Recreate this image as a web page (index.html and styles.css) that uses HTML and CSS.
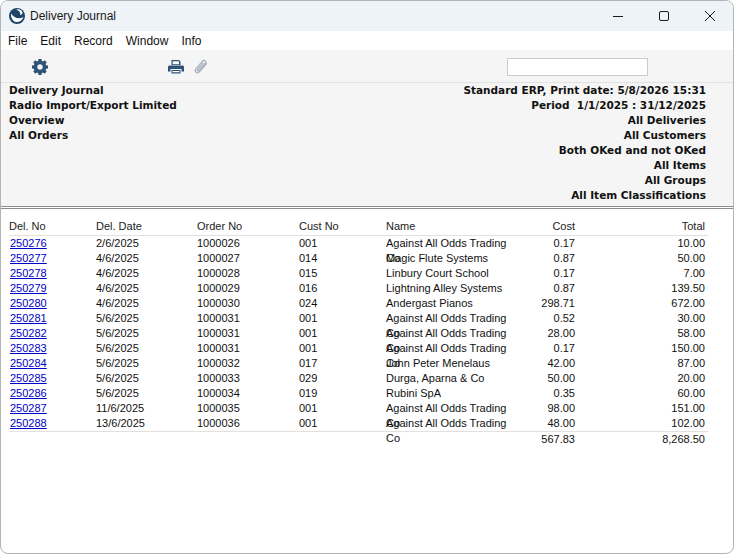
FILE: index.html
```html
<!DOCTYPE html>
<html lang="en">
<head>
    <meta charset="UTF-8">
    <title>Delivery Journal</title>
    <link rel="stylesheet" href="styles.css">
</head>
<body>
    <div class="window">
        <div class="titlebar">
            <svg class="logo" width="18" height="18" viewBox="0 0 18 18">
                <circle cx="9" cy="9" r="8" fill="#1f4468"/>
                <path d="M3 6.500c3 4.500 8 6 12.500 3.500-1 3.500-4.500 5.500-7.500 5-3-.5-5.500-4.500-5-8.500z" fill="#fff"/>
                <path d="M8 2.500c3-1 6 .5 6.500 3 .2 1.500-1 2.500-2.500 2.500 1-1.500 0-4-4-5.500z" fill="#fff"/>
            </svg>
            <span class="title">Delivery Journal</span>
            <div class="window-buttons">
                <svg width="12" height="12" viewBox="0 0 12 12"><path d="M1 6.500h10" stroke="#1a1a1a" fill="none"/></svg>
                <svg width="12" height="12" viewBox="0 0 12 12"><rect x="1.500" y="1.500" width="9" height="9" rx="1.500" stroke="#1a1a1a" fill="none"/></svg>
                <svg width="12" height="12" viewBox="0 0 12 12"><path d="M1 1l10 10M11 1L1 11" stroke="#1a1a1a" fill="none"/></svg>
            </div>
        </div>
        <div class="menubar">
            <span>File</span><span>Edit</span><span>Record</span><span>Window</span><span>Info</span>
        </div>
        <div class="toolbar">
            <svg class="gear" width="16" height="16" viewBox="0 0 18 18">
                <path fill-rule="evenodd" fill="#2d5273" d="M7.300 0h3.400l.4 2.200 1.300.6 1.900-1.300 2.300 2.300-1.300 1.900.6 1.300 2.100.4v3.200l-2.100.4-.6 1.300 1.300 1.900-2.300 2.300-1.900-1.300-1.300.6-.4 2.200H7.300l-.4-2.200-1.300-.6-1.900 1.300-2.300-2.300 1.300-1.900-.6-1.300L0 10.600V7.400l2.100-.4.600-1.300-1.300-1.900 2.300-2.300 1.900 1.300 1.300-.6zM9 6a3 3 0 1 0 0 6 3 3 0 0 0 0-6z"/>
            </svg>
            <svg class="printer" width="16" height="14" viewBox="0 0 16 14">
                <path fill="#2d5273" d="M3.500 0h7.500l1.500 1.500V5h-9zM1.500 5.500h13c.8 0 1.500.7 1.500 1.500v4.500h-2.500V9h-11v2.500H0V7c0-.8.700-1.500 1.500-1.500zM3.500 10h9v3.500h-9z"/>
                <path fill="#fff" d="M4.700 1.200h6.300v3h-6.300zM4.500 11h7v1.300h-7z"/>
                <path fill="#2d5273" d="M4.500 10h7v.8h-7z"/>
            </svg>
            <svg class="clip" width="14" height="16" viewBox="0 0 14 16">
                <path fill="none" stroke="#a9b3bd" stroke-width="1.300" stroke-linecap="round" d="M12.500 4.500l-6.800 8.200c-1 1.200-2.600 1.500-3.600.6s-1-2.400 0-3.600l6.300-7.500c.8-.9 1.900-1.100 2.700-.4s.7 1.800 0 2.700L5 11.500c-.4.500-1 .6-1.400.2s-.3-.9.100-1.400l5.300-6.300"/>
            </svg>
            <input class="search" type="text">
        </div>
        <div class="report-head">
            <div>
                <div>Delivery Journal</div>
                <div>Radio Import/Export Limited</div>
                <div>Overview</div>
                <div>All Orders</div>
            </div>
            <div class="head-right">
                <div>Standard ERP, Print date: 5/8/2026 15:31</div>
                <div>Period&nbsp; 1/1/2025 : 31/12/2025</div>
                <div>All Deliveries</div>
                <div>All Customers</div>
                <div>Both OKed and not OKed</div>
                <div>All Items</div>
                <div>All Groups</div>
                <div>All Item Classifications</div>
            </div>
        </div>
        <div class="report">
            <div class="row row-head">
                <span>Del. No</span><span>Del. Date</span><span>Order No</span><span>Cust No</span><span>Name</span><span class="num">Cost</span><span class="num">Total</span>
            </div>
            <div class="row"><a href="#">250276</a><span>2/6/2025</span><span>1000026</span><span>001</span><span>Against All Odds Trading Co</span><span class="num">0.17</span><span class="num">10.00</span></div>
            <div class="row"><a href="#">250277</a><span>4/6/2025</span><span>1000027</span><span>014</span><span>Magic Flute Systems</span><span class="num">0.87</span><span class="num">50.00</span></div>
            <div class="row"><a href="#">250278</a><span>4/6/2025</span><span>1000028</span><span>015</span><span>Linbury Court School</span><span class="num">0.17</span><span class="num">7.00</span></div>
            <div class="row"><a href="#">250279</a><span>4/6/2025</span><span>1000029</span><span>016</span><span>Lightning Alley Systems</span><span class="num">0.87</span><span class="num">139.50</span></div>
            <div class="row"><a href="#">250280</a><span>4/6/2025</span><span>1000030</span><span>024</span><span>Andergast Pianos</span><span class="num">298.71</span><span class="num">672.00</span></div>
            <div class="row"><a href="#">250281</a><span>5/6/2025</span><span>1000031</span><span>001</span><span>Against All Odds Trading Co</span><span class="num">0.52</span><span class="num">30.00</span></div>
            <div class="row"><a href="#">250282</a><span>5/6/2025</span><span>1000031</span><span>001</span><span>Against All Odds Trading Co</span><span class="num">28.00</span><span class="num">58.00</span></div>
            <div class="row"><a href="#">250283</a><span>5/6/2025</span><span>1000031</span><span>001</span><span>Against All Odds Trading Co</span><span class="num">0.17</span><span class="num">150.00</span></div>
            <div class="row"><a href="#">250284</a><span>5/6/2025</span><span>1000032</span><span>017</span><span>John Peter Menelaus</span><span class="num">42.00</span><span class="num">87.00</span></div>
            <div class="row"><a href="#">250285</a><span>5/6/2025</span><span>1000033</span><span>029</span><span>Durga, Aparna &amp; Co</span><span class="num">50.00</span><span class="num">20.00</span></div>
            <div class="row"><a href="#">250286</a><span>5/6/2025</span><span>1000034</span><span>019</span><span>Rubini SpA</span><span class="num">0.35</span><span class="num">60.00</span></div>
            <div class="row"><a href="#">250287</a><span>11/6/2025</span><span>1000035</span><span>001</span><span>Against All Odds Trading Co</span><span class="num">98.00</span><span class="num">151.00</span></div>
            <div class="row"><a href="#">250288</a><span>13/6/2025</span><span>1000036</span><span>001</span><span>Against All Odds Trading Co</span><span class="num">48.00</span><span class="num">102.00</span></div>
            <div class="row row-total">
                <span></span><span></span><span></span><span></span><span></span><span class="num">567.83</span><span class="num">8,268.50</span>
            </div>
        </div>
    </div>
</body>
</html>
```

FILE: styles.css
```css
html, body {
    margin: 0;
    padding: 0;
    background: #fff;
}
.window {
    width: 734px;
    height: 554px;
    box-sizing: border-box;
    border: 1px solid #b4b4b4;
    border-radius: 8px;
    overflow: hidden;
    background: #fff;
    font-family: "Liberation Sans", Arial, sans-serif;
    font-size: 11px;
    color: #111;
}
.titlebar {
    height: 30px;
    background: #eef3f8;
    display: flex;
    align-items: center;
    padding-left: 7px;
}
.title {
    margin-left: 4px;
    font-size: 12px;
    color: #1a1a1a;
}
.window-buttons {
    margin-left: auto;
    display: flex;
    gap: 34px;
    padding-right: 17px;
}
.menubar {
    height: 19px;
    display: flex;
    align-items: center;
    gap: 13px;
    padding-left: 7px;
    font-size: 12px;
}
.toolbar {
    height: 33px;
    background: #f5f5f5;
    border-bottom: 1px solid #e2e2e2;
    display: flex;
    align-items: center;
    box-sizing: border-box;
    padding-top: 2px;
}
.gear {
    margin-left: 31px;
}
.printer {
    margin-left: 120px;
}
.clip {
    margin-left: 10px;
}
.search {
    margin-left: 299px;
    width: 141px;
    height: 18px;
    box-sizing: border-box;
    border: 1px solid #ccc;
    background: #fff;
    padding: 0;
}
.report-head {
    height: 124px;
    box-sizing: border-box;
    background: #f5f5f5;
    border-bottom: 1px solid #8c8c8c;
    display: flex;
    justify-content: space-between;
    padding: 0 27px 0 8px;
    font-family: "DejaVu Sans", sans-serif;
    font-size: 10.500px;
    font-weight: 700;
    line-height: 15px;
}
.head-right {
    text-align: right;
}
.report {
    border-top: 1px solid #8c8c8c;
    margin-top: 1px;
    padding: 10px 0 0 8px;
}
.row {
    width: 699px;
    height: 15px;
    line-height: 15px;
    display: grid;
    grid-template-columns: 87px 101px 102px 87px 134px 55px 130px;
}
.row-head {
    height: 16px;
    border-bottom: 1px solid #e4e0dc;
    color: #222;
}
.row-total {
    border-top: 1px solid #e4e0dc;
}
.row a {
    color: #0000c8;
    padding-left: 1px;
}
.row > .num {
    text-align: right;
}
```
